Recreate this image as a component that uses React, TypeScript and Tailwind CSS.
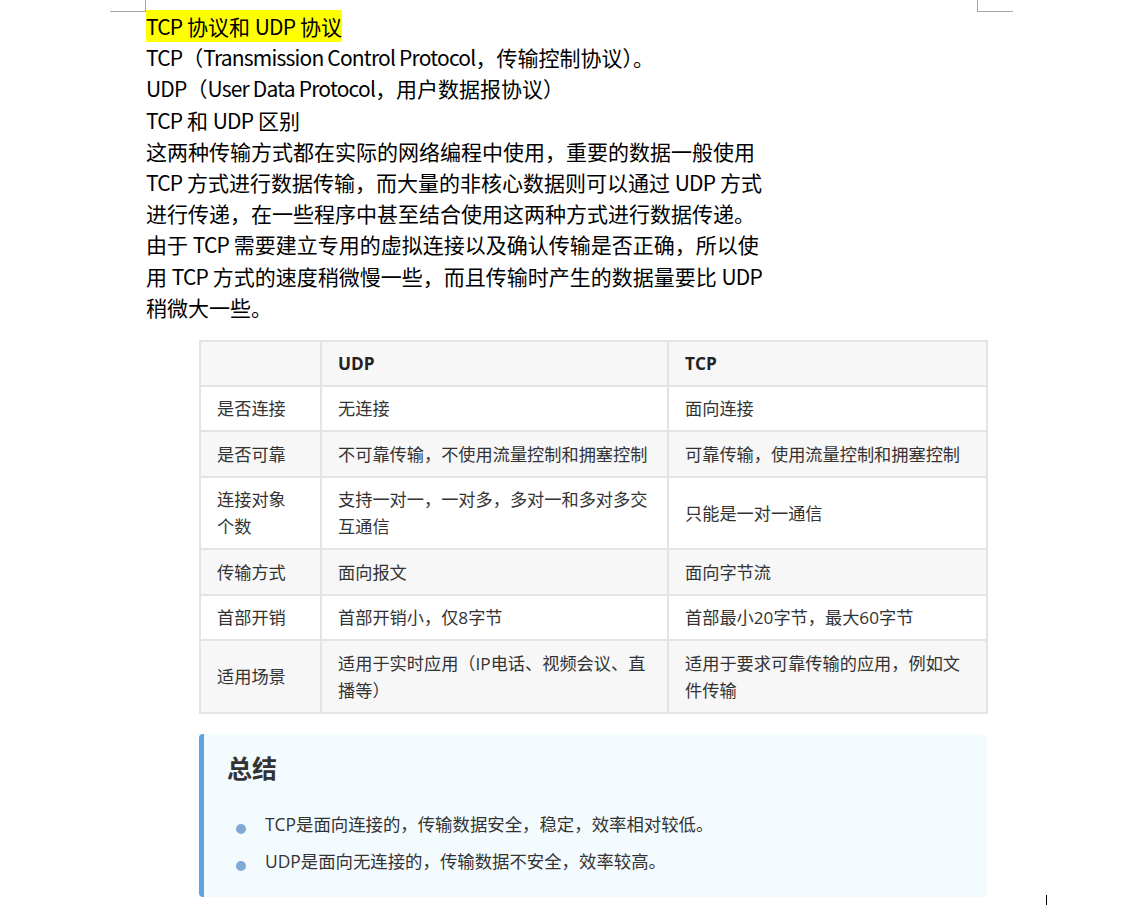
import React from 'react';

// Latin runs in the body are a little narrower in the reference
function L({ children }: { children: React.ReactNode }) {
  return <span className="tracking-[-0.8px]">{children}</span>;
}

interface Row {
  label: string[];
  udp: string[];
  tcp: string[];
  h: string;
}

const ROWS: Row[] = [
  { label: ['是否连接'], udp: ['无连接'], tcp: ['面向连接'], h: 'h-[45px]' },
  { label: ['是否可靠'], udp: ['不可靠传输，不使用流量控制和拥塞控制'], tcp: ['可靠传输，使用流量控制和拥塞控制'], h: 'h-[46px]' },
  { label: ['连接对象', '个数'], udp: ['支持一对一，一对多，多对一和多对多交', '互通信'], tcp: ['只能是一对一通信'], h: 'h-[72px]' },
  { label: ['传输方式'], udp: ['面向报文'], tcp: ['面向字节流'], h: 'h-[46px]' },
  { label: ['首部开销'], udp: ['首部开销小，仅8字节'], tcp: ['首部最小20字节，最大60字节'], h: 'h-[45px]' },
  { label: ['适用场景'], udp: ['适用于实时应用（IP电话、视频会议、直', '播等）'], tcp: ['适用于要求可靠传输的应用，例如文', '件传输'], h: 'h-[73px]' },
];

function Lines({ lines }: { lines: string[] }) {
  return (
    <>
      {lines.map((l, i) => (
        <div key={i} className="whitespace-nowrap">{l}</div>
      ))}
    </>
  );
}

export default function App() {
  return (
    <div className="relative w-[1142px] h-[905px] bg-white overflow-hidden">
      {/* page corner marks */}
      <div className="absolute left-[110px] top-0 w-[36px] h-[12px] border-r border-b border-[#a6a6a6]" />
      <div className="absolute left-[977px] top-0 w-[36px] h-[12px] border-l border-b border-[#a6a6a6]" />
      <div className="absolute left-[1046px] top-[895px] w-px h-[10px] bg-black" />

      <div className="pt-[11px] pl-[146px] text-[21px] leading-[31.2px] text-black font-['Noto_Sans_CJK_SC',sans-serif] whitespace-nowrap">
        <div>
          <span className="bg-[#ffff00] py-[1px]"><L>TCP</L> 协议和 <L>UDP</L> 协议</span>
        </div>
        <div><L>TCP</L>（<L>Transmission Control Protocol</L>，传输控制协议）。</div>
        <div><L>UDP</L>（<L>User Data Protocol</L>，用户数据报协议）</div>
        <div><L>TCP</L> 和 <L>UDP</L> 区别</div>
        <div>这两种传输方式都在实际的网络编程中使用，重要的数据一般使用</div>
        <div><L>TCP</L> 方式进行数据传输，而大量的非核心数据则可以通过 <L>UDP</L> 方式</div>
        <div>进行传递，在一些程序中甚至结合使用这两种方式进行数据传递。</div>
        <div>由于 <L>TCP</L> 需要建立专用的虚拟连接以及确认传输是否正确，所以使</div>
        <div>用 <L>TCP</L> 方式的速度稍微慢一些，而且传输时产生的数据量要比 <L>UDP</L></div>
        <div>稍微大一些。</div>
      </div>

      <div className="pl-[199px] pt-[17px] font-['Open_Sans','Noto_Sans_CJK_SC',sans-serif] text-[17.2px] leading-[27px] text-[#333]">
        <table className="border-collapse w-[787px] table-fixed">
          <colgroup>
            <col className="w-[121px]" />
            <col className="w-[347px]" />
            <col className="w-[319px]" />
          </colgroup>
          <thead>
            <tr className="h-[45px] bg-[#f7f7f7]">
              <th className="border-2 border-[#e2e4e7] pl-[16px]" />
              <th className="border-2 border-[#e2e4e7] pl-[16px] text-left font-bold text-[#222]">UDP</th>
              <th className="border-2 border-[#e2e4e7] pl-[16px] text-left font-bold text-[#222]">TCP</th>
            </tr>
          </thead>
          <tbody>
            {ROWS.map((r, i) => (
              <tr key={i} className={`${r.h} ${i % 2 === 1 ? 'bg-[#f7f7f7]' : 'bg-white'}`}>
                <td className="border-2 border-[#e2e4e7] pl-[16px] align-middle"><Lines lines={r.label} /></td>
                <td className="border-2 border-[#e2e4e7] pl-[16px] align-middle"><Lines lines={r.udp} /></td>
                <td className="border-2 border-[#e2e4e7] pl-[16px] align-middle"><Lines lines={r.tcp} /></td>
              </tr>
            ))}
          </tbody>
        </table>

        {/* summary box */}
        <div className="mt-[20px] w-[788px] h-[163px] bg-[#f4fbff] border-l-[5px] border-[#5ba3e3] rounded-[4px] pl-[23px] pt-[16px] text-[17.4px]">
          <h3 className="text-[25px] leading-[36px] font-bold text-[#333]">总结</h3>
          <ul className="mt-[25px] flex flex-col gap-[10px]">
            <li className="flex items-center gap-[19px] leading-[27px]">
              <span className="ml-[9px] w-[10px] h-[10px] rounded-full bg-[#7eaad4] mt-[8px]" />
              <span>TCP是面向连接的，传输数据安全，稳定，效率相对较低。</span>
            </li>
            <li className="flex items-center gap-[19px] leading-[27px]">
              <span className="ml-[9px] w-[10px] h-[10px] rounded-full bg-[#7eaad4] mt-[8px]" />
              <span>UDP是面向无连接的，传输数据不安全，效率较高。</span>
            </li>
          </ul>
        </div>
      </div>
    </div>
  );
}
